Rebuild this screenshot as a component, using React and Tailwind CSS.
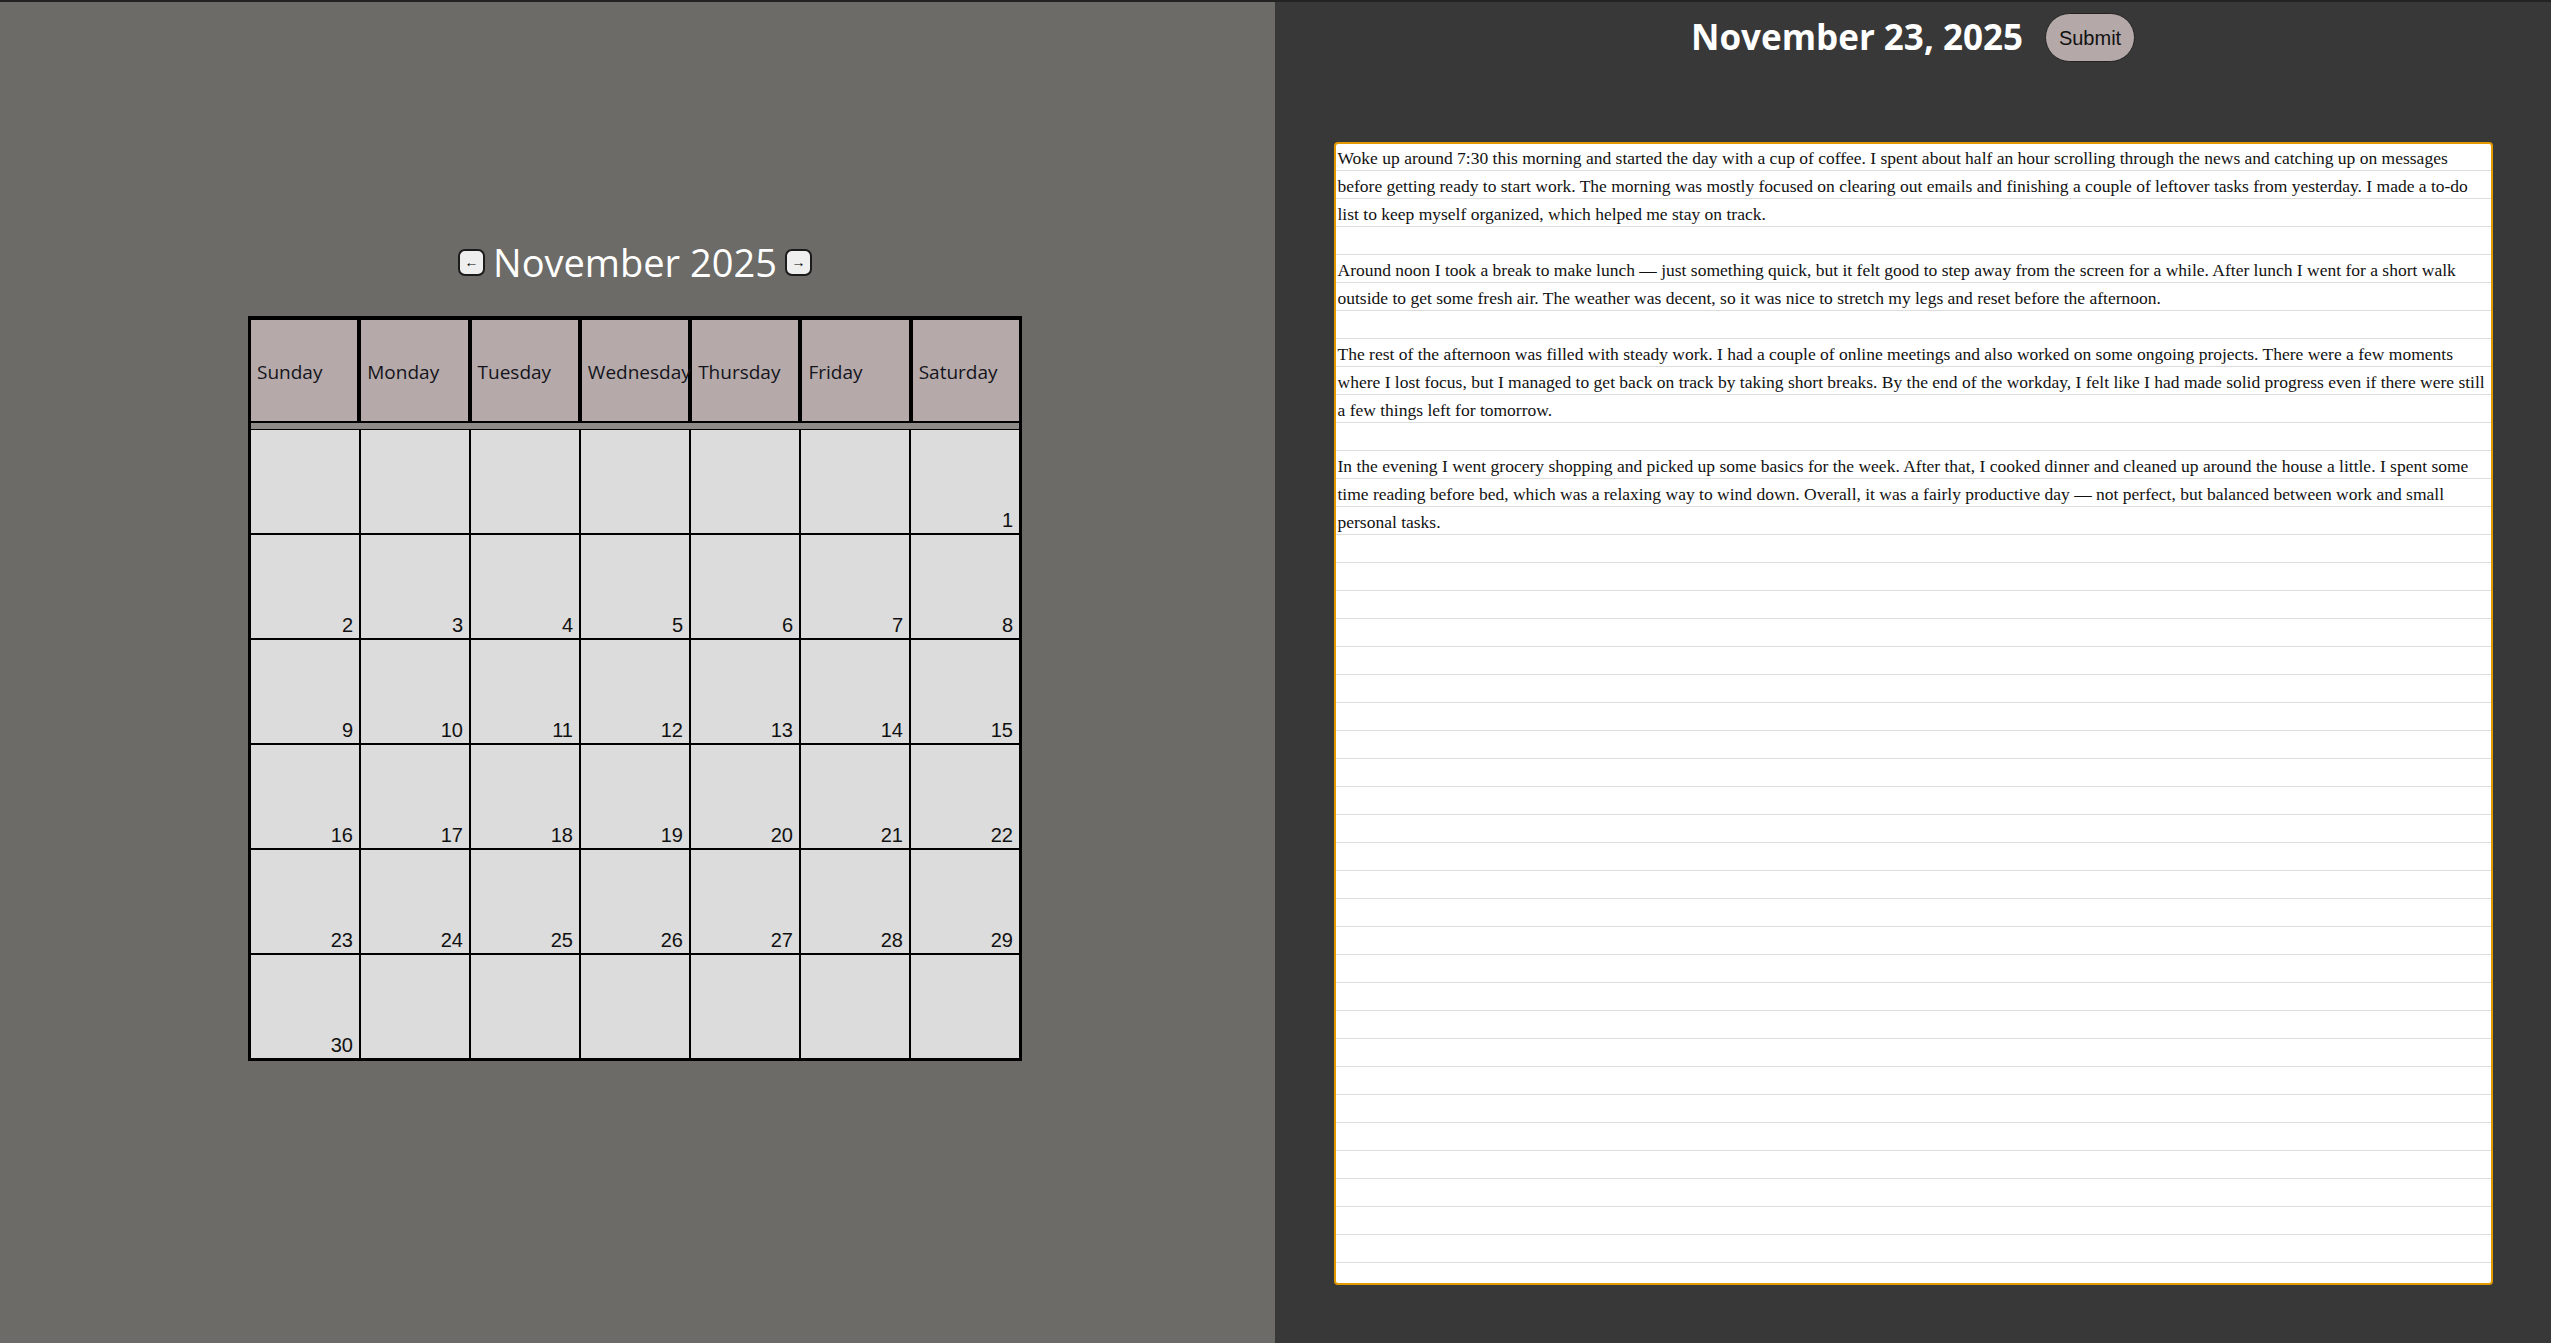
import React from "react";

const DAYS = ["Sunday", "Monday", "Tuesday", "Wednesday", "Thursday", "Friday", "Saturday"];

const TEXT = [
  "Woke up around 7:30 this morning and started the day with a cup of coffee. I spent about half an hour scrolling through the news and catching up on messages",
  "before getting ready to start work. The morning was mostly focused on clearing out emails and finishing a couple of leftover tasks from yesterday. I made a to-do",
  "list to keep myself organized, which helped me stay on track.",
  "",
  "Around noon I took a break to make lunch \u2014 just something quick, but it felt good to step away from the screen for a while. After lunch I went for a short walk",
  "outside to get some fresh air. The weather was decent, so it was nice to stretch my legs and reset before the afternoon.",
  "",
  "The rest of the afternoon was filled with steady work. I had a couple of online meetings and also worked on some ongoing projects. There were a few moments",
  "where I lost focus, but I managed to get back on track by taking short breaks. By the end of the workday, I felt like I had made solid progress even if there were still",
  "a few things left for tomorrow.",
  "",
  "In the evening I went grocery shopping and picked up some basics for the week. After that, I cooked dinner and cleaned up around the house a little. I spent some",
  "time reading before bed, which was a relaxing way to wind down. Overall, it was a fairly productive day \u2014 not perfect, but balanced between work and small",
  "personal tasks.",
].join("\n");

function buildCells() {
  const cells = [];
  const startOffset = 6; // Nov 1, 2025 is a Saturday
  for (let i = 0; i < 42; i++) {
    const d = i - startOffset + 1;
    cells.push(d >= 1 && d <= 30 ? d : null);
  }
  return cells;
}

function ArrowButton({ children }) {
  return (
    <button className="w-[27px] h-[27px] flex items-center justify-center bg-[#efefef] border-2 border-[#1b1b1b] rounded-[7px] text-[14px] leading-none text-black font-['Liberation_Sans',sans-serif]">
      {children}
    </button>
  );
}

function Calendar() {
  const cells = buildCells();
  return (
    <div className="w-[774px] border-[3px] border-t-4 border-black bg-black flex flex-col">
      <div className="grid grid-cols-7 gap-x-[4px] h-[101px]">
        {DAYS.map((d) => (
          <div
            key={d}
            className="bg-[#b5aaa9] flex items-center pl-[6px] pt-[4px] text-[19px] text-[#14141c] whitespace-nowrap font-['Open_Sans',sans-serif]"
          >
            {d}
          </div>
        ))}
      </div>
      <div className="mt-[2px] h-[6px] bg-[#8f8b89]" />
      <div className="mt-[1px] grid grid-cols-7 gap-[2px] grid-rows-[repeat(6,103px)]">
        {cells.map((d, i) => (
          <div
            key={i}
            className="bg-[#dcdcdc] flex items-end justify-end pr-[6px] pb-[3px] text-[20px] leading-[20px] text-[#111] font-['Liberation_Sans',Arial,sans-serif]"
          >
            {d ?? ""}
          </div>
        ))}
      </div>
    </div>
  );
}

export default function App() {
  return (
    <div className="flex w-full h-[1343px] border-t-2 border-[#222222] overflow-hidden">
      <div className="w-[1275px] shrink-0 bg-[#6c6b67] flex flex-col items-center pt-[241px] pr-[5px]">
        <div className="flex items-center gap-[8px] h-[38px]">
          <ArrowButton>←</ArrowButton>
          <h1 className="text-[38px] leading-[38px] text-white font-normal font-['Open_Sans',sans-serif]">
            November 2025
          </h1>
          <ArrowButton>→</ArrowButton>
        </div>
        <div className="mt-[35px]">
          <Calendar />
        </div>
      </div>
      <div className="flex-1 bg-[#383838] flex flex-col items-center pt-[11px]">
        <div className="flex items-center gap-[22px] h-[49px]">
          <h2 className="text-[35px] font-bold text-white font-['Open_Sans',sans-serif]">
            November 23, 2025
          </h2>
          <button className="w-[90px] h-[49px] rounded-full bg-[#b5a8a8] border border-[#222] text-[20px] text-[#111] font-['Liberation_Sans',Arial,sans-serif]">
            Submit
          </button>
        </div>
        <textarea
          className="mt-[80px] w-[1159px] h-[1143px] shrink-0 resize-none overflow-hidden whitespace-pre border-2 border-[#e39a00] rounded-[4px] bg-white bg-[image:repeating-linear-gradient(to_bottom,transparent_0px,transparent_26px,#dddddd_26px,#dddddd_27px,transparent_27px,transparent_28px)] px-[2px] py-0 text-[17.5px] leading-[28px] text-[#111] font-['Liberation_Serif',serif] outline-none"
          wrap="off"
          defaultValue={TEXT}
        />
      </div>
    </div>
  );
}
